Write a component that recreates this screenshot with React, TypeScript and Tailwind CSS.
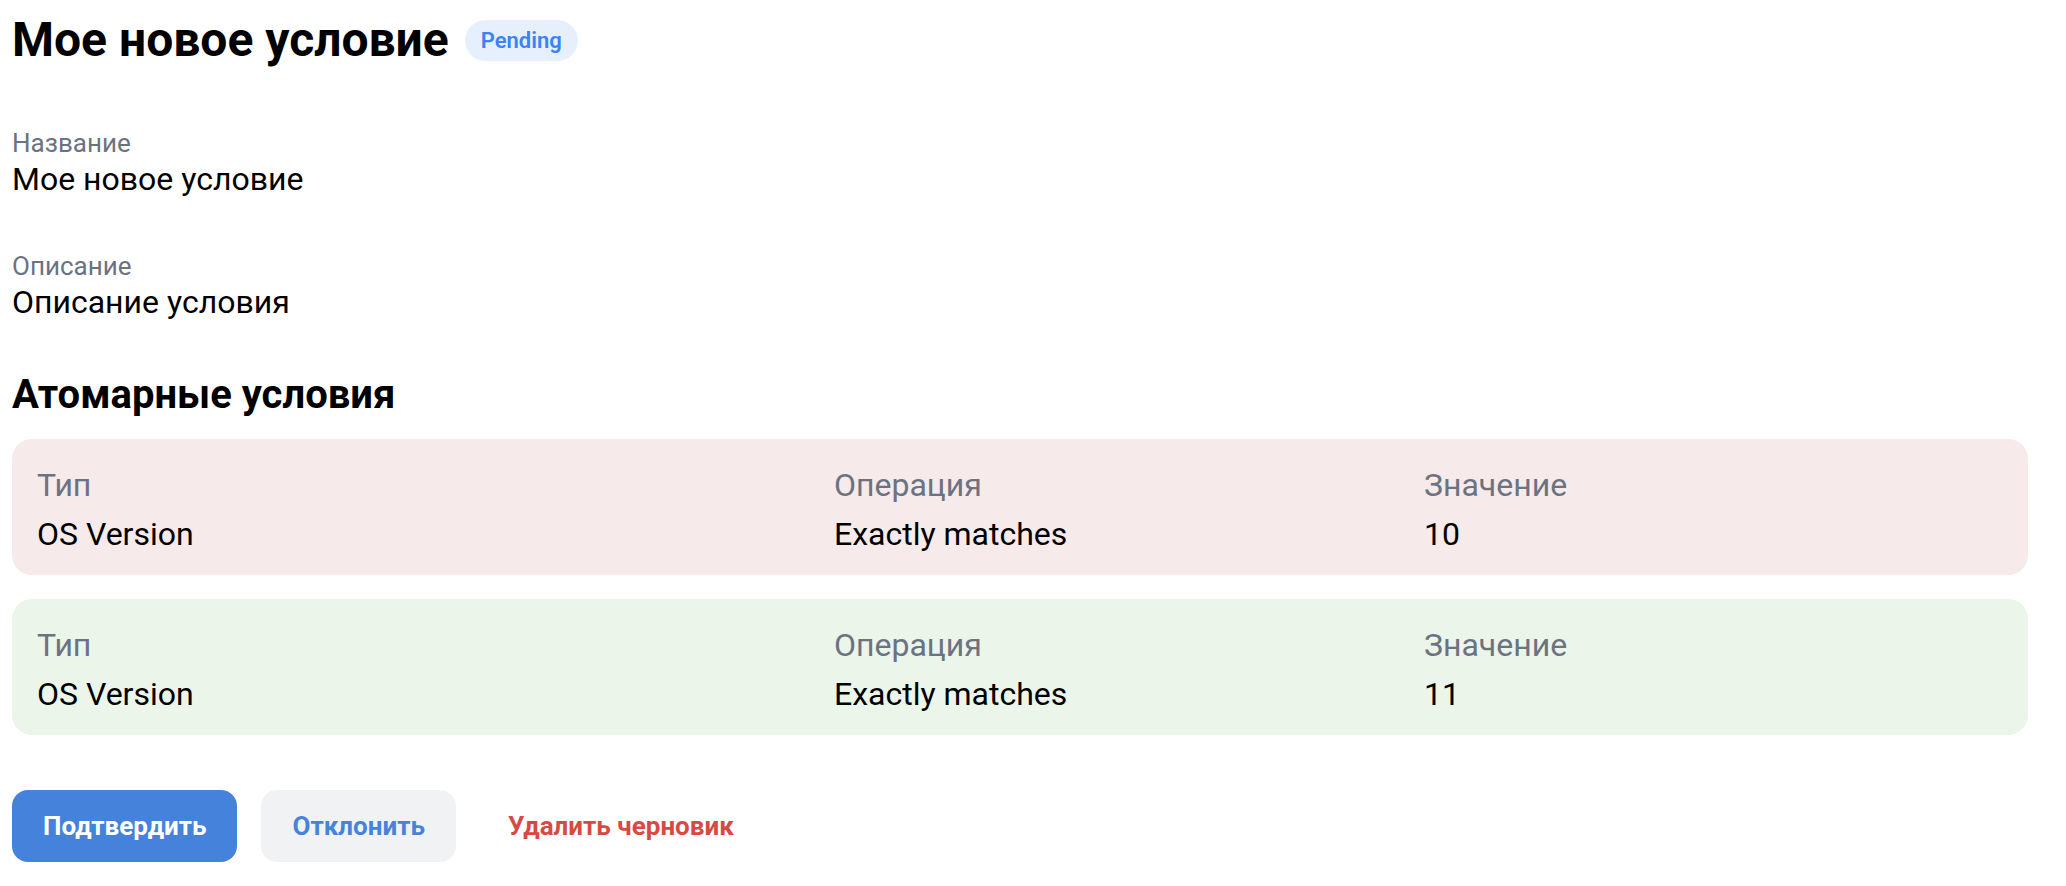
import React from "react";

const font = { fontFamily: "Roboto, 'Noto Sans', Arial, sans-serif" };

function Field({ label, value, className = "" }: { label: string; value: string; className?: string }) {
  return (
    <div className={className}>
      <div className="text-[26px] leading-[28px] text-[#6b7280]">{label}</div>
      <div className="mt-[3px] text-[32px] leading-[38px] text-black">{value}</div>
    </div>
  );
}

function Card({ bg, value }: { bg: string; value: string }) {
  const cols = [
    ["Тип", "OS Version"],
    ["Операция", "Exactly matches"],
    ["Значение", value],
  ];
  return (
    <div className={`${bg} rounded-[20px] px-[25px] pt-[25px] pb-[20px] grid grid-cols-[797px_590px_1fr]`}>
      {cols.map(([l, v]) => (
        <div key={l} className="flex flex-col gap-[7px]">
          <div className="text-[32px] leading-[42px] text-[#6b7280]">{l}</div>
          <div className="text-[32px] leading-[42px] text-black">{v}</div>
        </div>
      ))}
    </div>
  );
}

export default function App() {
  return (
    <div style={font} className="bg-white min-h-screen w-[2066px] pl-[12px] pr-[38px] pt-[11px] text-black">
      <div className="mt-[1px] flex items-center gap-[16px] h-[56px]">
        <h1 className="text-[48px] leading-[56px] font-bold">Мое новое условие</h1>
        <span className="h-[41px] px-[16px] rounded-full bg-[#e6f0fd] text-[#3b82f6] text-[22px] font-semibold flex items-center">
          Pending
        </span>
      </div>

      <Field label="Название" value="Мое новое условие" className="mt-[61px]" />
      <Field label="Описание" value="Описание условия" className="mt-[54px]" />

      <h2 className="mt-[50px] text-[40px] leading-[48px] font-bold">Атомарные условия</h2>

      <div className="mt-[20px] flex flex-col gap-[24px]">
        <Card bg="bg-[#f7eaea]" value="10" />
        <Card bg="bg-[#ecf5ea]" value="11" />
      </div>

      <div className="mt-[55px] flex items-center gap-[24px]">
        <button className="h-[72px] px-[31px] rounded-[16px] bg-[#4582db] text-white text-[26px] font-bold">
          Подтвердить
        </button>
        <button className="h-[72px] px-[31px] rounded-[16px] bg-[#f1f2f4] text-[#4683db] text-[26px] font-bold">
          Отклонить
        </button>
        <button className="h-[72px] px-[28px] rounded-[16px] text-[#d64a43] text-[26px] font-bold">
          Удалить черновик
        </button>
      </div>
    </div>
  );
}
